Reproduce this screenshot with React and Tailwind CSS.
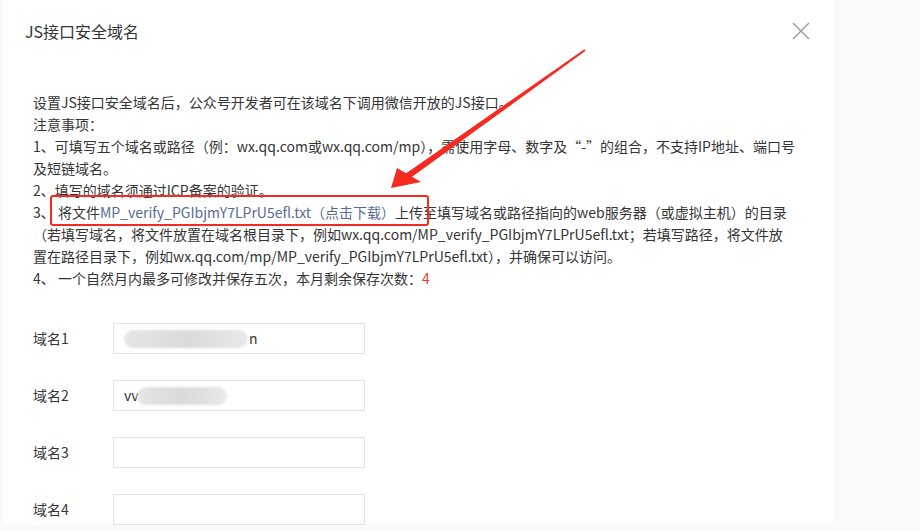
import React from 'react';

const font = { fontFamily: '"Noto Sans CJK SC", "Noto Sans", sans-serif' };

const Blur = ({ className }) => (
  <span className={`inline-block rounded-full bg-gradient-to-r from-[#e6e6e6] via-[#dadada] to-[#e9e9e9] blur-[1px] ${className}`} />
);

const Field = ({ label, children }) => (
  <div className="flex items-center h-[31px]">
    <span className="w-[80px] text-[14px] text-[#353535]">{label}</span>
    <div className="w-[252px] h-[31px] border border-[#e2e2e2] bg-white flex items-center px-[10px] text-[14px] text-[#353535]">
      {children}
    </div>
  </div>
);

export default function App() {
  return (
    <div className="relative w-[920px] h-[531px] bg-[#fafafa] overflow-hidden" style={font}>
      <div className="ml-[3px] w-[830px] h-[525px] bg-white flex flex-col">
        {/* header */}
        <div className="flex items-center justify-between h-[62px] pl-[22px] pr-[22px]">
          <h1 className="text-[16px] text-[#353535] font-normal">JS接口安全域名</h1>
          <svg width="18" height="18" viewBox="0 0 18 18" className="mr-[1px]">
            <path d="M1 1 L17 17 M17 1 L1 17" stroke="#9a9a9a" strokeWidth="1.4" />
          </svg>
        </div>

        {/* notes */}
        <div className="pl-[30px] pt-[29px] text-[14px] leading-[22px] text-[#353535] whitespace-nowrap">
          <p>设置JS接口安全域名后，公众号开发者可在该域名下调用微信开放的JS接口。</p>
          <p>注意事项：</p>
          <p>1、可填写五个域名或路径（例：wx.qq.com或wx.qq.com/mp），需使用字母、数字及“-”的组合，不支持IP地址、端口号</p>
          <p>及短链域名。</p>
          <p>2、填写的域名须通过ICP备案的验证。</p>
          <p>
            3、 将文件<span className="text-[#576b95]">MP_verify_PGIbjmY7LPrU5efl.txt（点击下载）</span>上传至填写域名或路径指向的web服务器（或虚拟主机）的目录
          </p>
          <p>（若填写域名，将文件放置在域名根目录下，例如wx.qq.com/MP_verify_PGIbjmY7LPrU5efl.txt；若填写路径，将文件放</p>
          <p>置在路径目录下，例如wx.qq.com/mp/MP_verify_PGIbjmY7LPrU5efl.txt），并确保可以访问。</p>
          <p>
            4、 一个自然月内最多可修改并保存五次，本月剩余保存次数：<span className="text-[#f43530]">4</span>
          </p>
        </div>

        {/* form */}
        <div className="pl-[30px] pt-[34px] flex flex-col gap-[26px]">
          <Field label="域名1">
            <Blur className="w-[124px] h-[18px]" />
            <span className="ml-[1px]">n</span>
          </Field>
          <Field label="域名2">
            <span>vv</span>
            <Blur className="w-[90px] h-[18px] -ml-[2px]" />
          </Field>
          <Field label="域名3" />
          <Field label="域名4" />
        </div>
      </div>

      {/* annotation: red box */}
      <div className="absolute left-[50px] top-[195px] w-[379px] h-[31px] border-[2px] border-[#f52a21] rounded-[3px] pointer-events-none" />

      {/* annotation: arrow */}
      <svg className="absolute left-0 top-0 pointer-events-none" width="920" height="531" viewBox="0 0 920 531">
        <polygon points="584.4,49.2 585.6,50.8 407,180.5 403,175.5" fill="#f52a21" />
        <polygon points="391,188 397,168 421,182" fill="#f52a21" />
      </svg>
    </div>
  );
}
